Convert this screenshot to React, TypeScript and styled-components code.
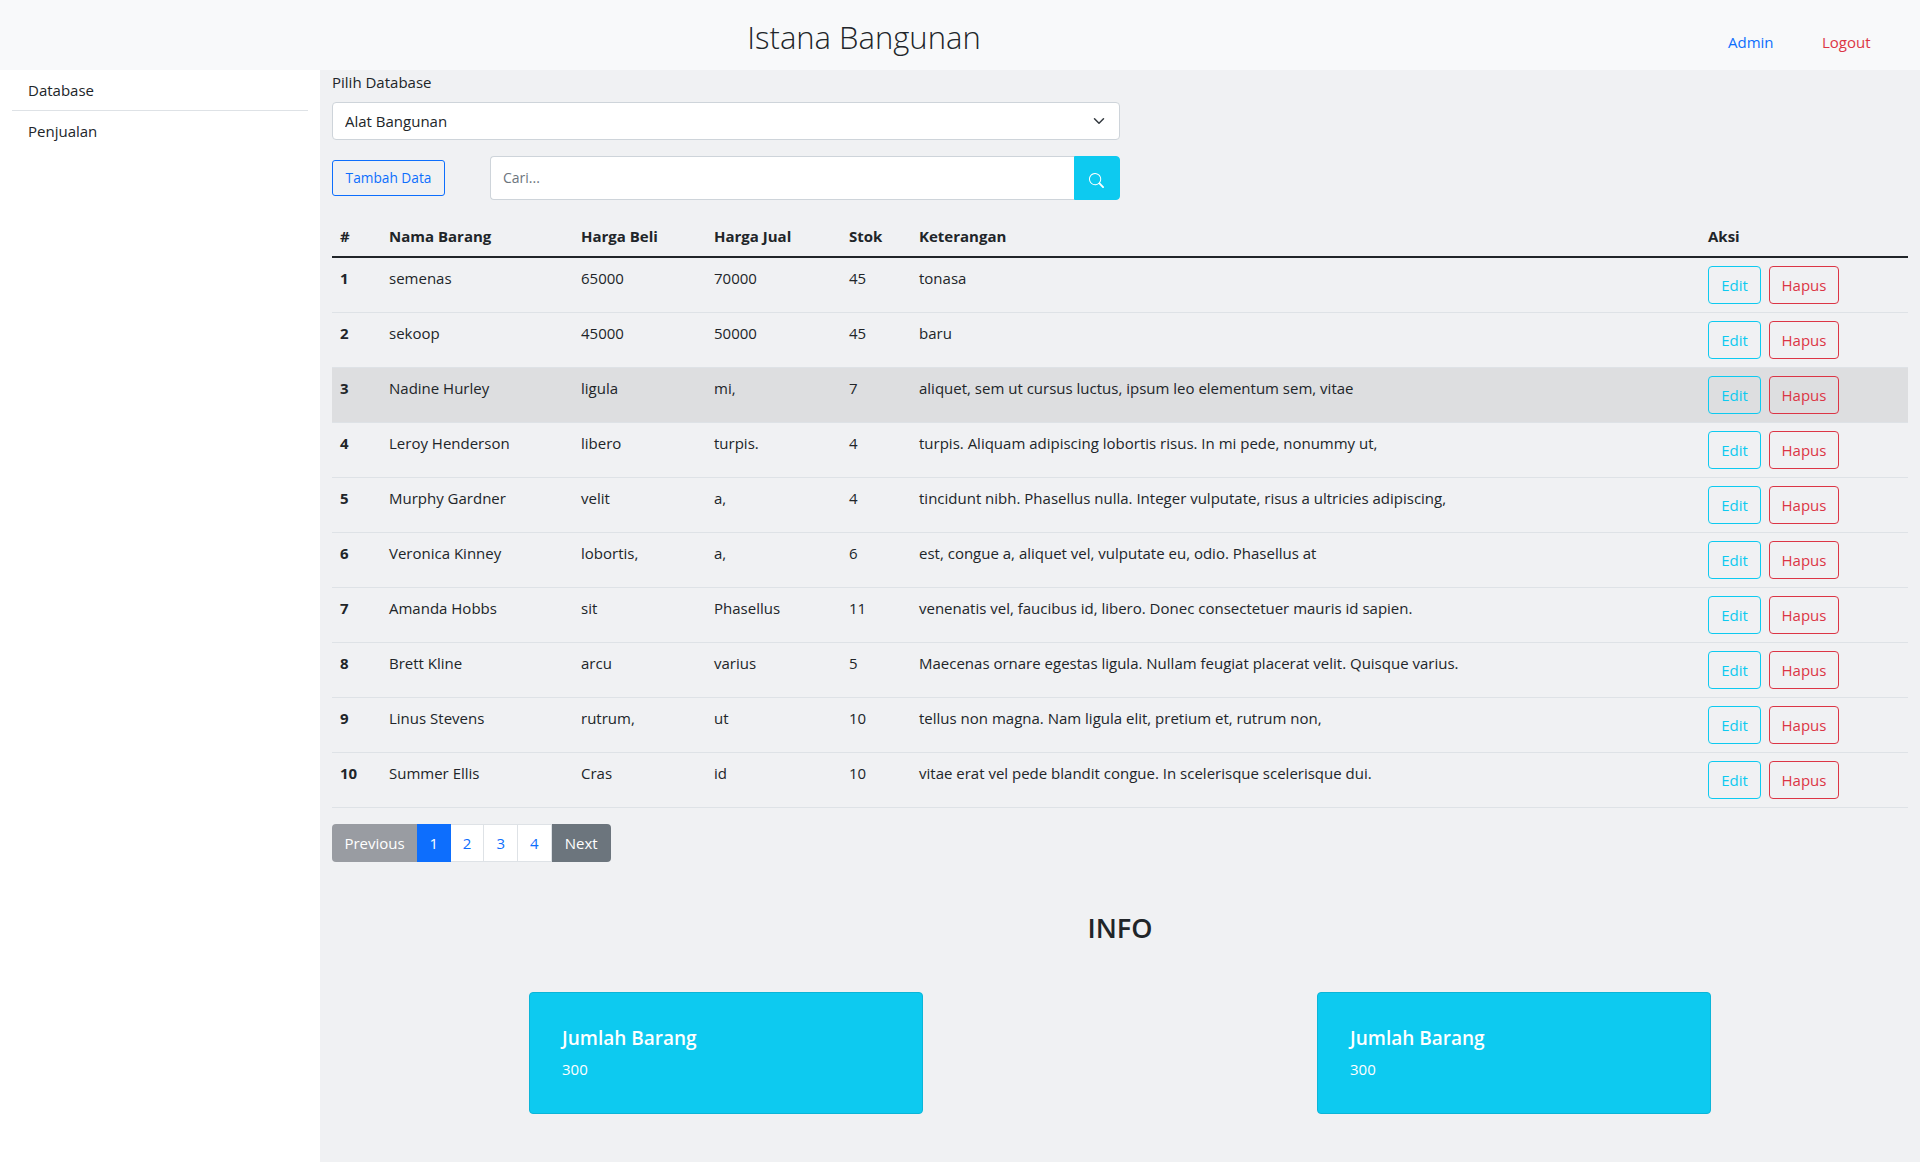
import React from "react";
import styled, { createGlobalStyle } from "styled-components";
import { BsSearch } from "react-icons/bs";

const Global = createGlobalStyle`
  * { box-sizing: border-box; }
  body {
    margin: 0;
    background: #fff;
    color: #212529;
    font-family: "Open Sans", "Liberation Sans", sans-serif;
    font-size: 15px;
    line-height: 24px;
  }
`;

const Page = styled.div`
  width: 1920px;
  height: 1162px;
  display: flex;
  flex-direction: column;
  overflow: hidden;
`;

const Navbar = styled.header`
  height: 70px;
  flex: none;
  display: flex;
  align-items: center;
  background: #f8f9fa;
`;

const Brand = styled.div`
  width: 1728px;
  text-align: center;
  font-size: 31px;
  font-weight: 300;
  line-height: 40px;
  padding-top: 4px;
  color: #212529;
`;

const NavLink = styled.a<{ $color: string; $width: number }>`
  width: ${(p) => p.$width}px;
  margin-top: 14px;
  color: ${(p) => p.$color};
`;

const Body = styled.div`
  flex: 1;
  display: flex;
`;

const Sidebar = styled.nav`
  width: 320px;
  flex: none;
  padding: 0 12px;
`;

const SideItem = styled.div<{ $last?: boolean }>`
  padding: 8px 16px;
  height: ${(p) => (p.$last ? 40 : 41)}px;
  border-bottom: ${(p) => (p.$last ? "none" : "1px solid #dee2e6")};
`;

const Main = styled.main`
  flex: 1;
  background: #f0f1f3;
  padding: 0 12px;
`;

const Label = styled.label`
  display: block;
  height: 32px;
  line-height: 24px;
`;

const SelectWrap = styled.div`
  position: relative;
  width: 788px;
`;

const DbSelect = styled.select`
  display: block;
  width: 100%;
  height: 38px;
  padding: 0 36px 0 12px;
  appearance: none;
  background: #fff;
  border: 1px solid #ced4da;
  border-radius: 4px;
  color: #212529;
  font: inherit;
`;

const Chevron = styled.svg`
  position: absolute;
  right: 15px;
  top: 13px;
  width: 12px;
  height: 12px;
  pointer-events: none;
`;

const Toolbar = styled.div`
  width: 788px;
  margin-top: 16px;
  height: 44px;
  display: flex;
  align-items: center;
`;

const OutlineButton = styled.button<{ $color: string }>`
  width: 113px;
  height: 36px;
  padding: 0;
  border: 1px solid ${(p) => p.$color};
  border-radius: 3px;
  background: transparent;
  color: ${(p) => p.$color};
  font: inherit;
  font-size: 13.7px;
`;

const SearchGroup = styled.div`
  margin-left: auto;
  width: 630px;
  height: 44px;
  display: flex;
`;

const SearchInput = styled.input`
  flex: 1;
  min-width: 0;
  padding: 0 12px;
  border: 1px solid #ced4da;
  border-right: none;
  border-radius: 4px 0 0 4px;
  background: #fff;
  font: inherit;
  font-size: 14px;
  &::placeholder { color: #6c757d; }
`;

const SearchButton = styled.button`
  width: 46px;
  border: 1px solid #0dcaf0;
  border-radius: 0 4px 4px 0;
  background: #0dcaf0;
  color: #fff;
  display: flex;
  align-items: center;
  justify-content: center;
  padding: 4px 2px 0 0;
  font-size: 15px;
`;

const Table = styled.table`
  width: 1576px;
  margin-top: 16px;
  border-collapse: collapse;
  table-layout: fixed;
`;

const Th = styled.th`
  height: 41px;
  padding: 8px;
  text-align: left;
  font-weight: 700;
  border-bottom: 2px solid #212529;
  font-size: 15px;
`;

const Row = styled.tr<{ $active?: boolean }>`
  background: ${(p) => (p.$active ? "#dddee0" : "transparent")};
`;

const Td = styled.td<{ $bold?: boolean }>`
  height: 55px;
  padding: 8px;
  vertical-align: top;
  border-bottom: 1px solid #dee2e6;
  font-weight: ${(p) => (p.$bold ? 700 : 400)};
  white-space: nowrap;
`;

const Actions = styled.div`
  display: flex;
  gap: 8px;
`;

const RowButton = styled.button<{ $color: string; $width: number }>`
  width: ${(p) => p.$width}px;
  height: 38px;
  padding: 0;
  border: 1px solid ${(p) => p.$color};
  border-radius: 4px;
  background: transparent;
  color: ${(p) => p.$color};
  font: inherit;
`;

const Pager = styled.div`
  margin-top: 16px;
  display: flex;
  height: 38px;
`;

const PageEnd = styled.a<{ $dim?: boolean; $side: "l" | "r"; $width: number }>`
  width: ${(p) => p.$width}px;
  display: flex;
  align-items: center;
  justify-content: center;
  background: ${(p) => (p.$dim ? "#999ca2" : "#6c757d")};
  color: #fff;
  border-radius: ${(p) => (p.$side === "l" ? "4px 0 0 4px" : "0 4px 4px 0")};
`;

const PageNum = styled.a<{ $active?: boolean }>`
  width: 33.7px;
  display: flex;
  align-items: center;
  justify-content: center;
  background: ${(p) => (p.$active ? "#0d6efd" : "#fff")};
  color: ${(p) => (p.$active ? "#fff" : "#0d6efd")};
  border: 1px solid ${(p) => (p.$active ? "#0d6efd" : "#dee2e6")};
  border-left-width: ${(p) => (p.$active ? 1 : 0)}px;
`;

const InfoTitle = styled.h3`
  margin: 48px 0 0;
  text-align: center;
  font-size: 27px;
  font-weight: 600;
  line-height: 36px;
`;

const CardRow = styled.div`
  margin-top: 46px;
  display: grid;
  grid-template-columns: 1fr 1fr;
`;

const Card = styled.div`
  justify-self: center;
  width: 394px;
  height: 122px;
  padding: 32px;
  background: #0dcaf0;
  border: 1px solid #0bb5d8;
  border-radius: 4px;
  color: #fff;
`;

const CardTitle = styled.h5`
  margin: 1px 0 7px;
  font-size: 19px;
  font-weight: 600;
  line-height: 24px;
`;

const CardText = styled.p`
  margin: 0;
  font-size: 15px;
`;

const rows = [
  ["semenas", "65000", "70000", "45", "tonasa"],
  ["sekoop", "45000", "50000", "45", "baru"],
  ["Nadine Hurley", "ligula", "mi,", "7", "aliquet, sem ut cursus luctus, ipsum leo elementum sem, vitae"],
  ["Leroy Henderson", "libero", "turpis.", "4", "turpis. Aliquam adipiscing lobortis risus. In mi pede, nonummy ut,"],
  ["Murphy Gardner", "velit", "a,", "4", "tincidunt nibh. Phasellus nulla. Integer vulputate, risus a ultricies adipiscing,"],
  ["Veronica Kinney", "lobortis,", "a,", "6", "est, congue a, aliquet vel, vulputate eu, odio. Phasellus at"],
  ["Amanda Hobbs", "sit", "Phasellus", "11", "venenatis vel, faucibus id, libero. Donec consectetuer mauris id sapien."],
  ["Brett Kline", "arcu", "varius", "5", "Maecenas ornare egestas ligula. Nullam feugiat placerat velit. Quisque varius."],
  ["Linus Stevens", "rutrum,", "ut", "10", "tellus non magna. Nam ligula elit, pretium et, rutrum non,"],
  ["Summer Ellis", "Cras", "id", "10", "vitae erat vel pede blandit congue. In scelerisque scelerisque dui."],
];

const colWidths = [49, 192, 133, 135, 70, 789, 208];
const heads = ["#", "Nama Barang", "Harga Beli", "Harga Jual", "Stok", "Keterangan", "Aksi"];

export default function App() {
  return (
    <Page>
      <Global />
      <Navbar>
        <Brand>Istana Bangunan</Brand>
        <NavLink $color="#0d6efd" $width={94}>Admin</NavLink>
        <NavLink $color="#dc3545" $width={98}>Logout</NavLink>
      </Navbar>
      <Body>
        <Sidebar>
          <SideItem>Database</SideItem>
          <SideItem $last>Penjualan</SideItem>
        </Sidebar>
        <Main>
          <Label>Pilih Database</Label>
          <SelectWrap>
            <DbSelect defaultValue="alat">
              <option value="alat">Alat Bangunan</option>
            </DbSelect>
            <Chevron viewBox="0 0 16 16">
              <path d="M2 5l6 6 6-6" fill="none" stroke="#343a40" strokeWidth="2" strokeLinecap="round" strokeLinejoin="round" />
            </Chevron>
          </SelectWrap>
          <Toolbar>
            <OutlineButton $color="#0d6efd">Tambah Data</OutlineButton>
            <SearchGroup>
              <SearchInput placeholder="Cari..." />
              <SearchButton><BsSearch /></SearchButton>
            </SearchGroup>
          </Toolbar>
          <Table>
            <colgroup>
              {colWidths.map((w, i) => <col key={i} width={w} />)}
            </colgroup>
            <thead>
              <tr>{heads.map((h) => <Th key={h}>{h}</Th>)}</tr>
            </thead>
            <tbody>
              {rows.map((r, i) => (
                <Row key={i} $active={i === 2}>
                  <Td $bold>{i + 1}</Td>
                  {r.map((c, j) => <Td key={j}>{c}</Td>)}
                  <Td>
                    <Actions>
                      <RowButton $color="#0dcaf0" $width={53}>Edit</RowButton>
                      <RowButton $color="#dc3545" $width={70}>Hapus</RowButton>
                    </Actions>
                  </Td>
                </Row>
              ))}
            </tbody>
          </Table>
          <Pager>
            <PageEnd $dim $side="l" $width={85}>Previous</PageEnd>
            <PageNum $active>1</PageNum>
            <PageNum>2</PageNum>
            <PageNum>3</PageNum>
            <PageNum>4</PageNum>
            <PageEnd $side="r" $width={59}>Next</PageEnd>
          </Pager>
          <InfoTitle>INFO</InfoTitle>
          <CardRow>
            <Card>
              <CardTitle>Jumlah Barang</CardTitle>
              <CardText>300</CardText>
            </Card>
            <Card>
              <CardTitle>Jumlah Barang</CardTitle>
              <CardText>300</CardText>
            </Card>
          </CardRow>
        </Main>
      </Body>
    </Page>
  );
}
